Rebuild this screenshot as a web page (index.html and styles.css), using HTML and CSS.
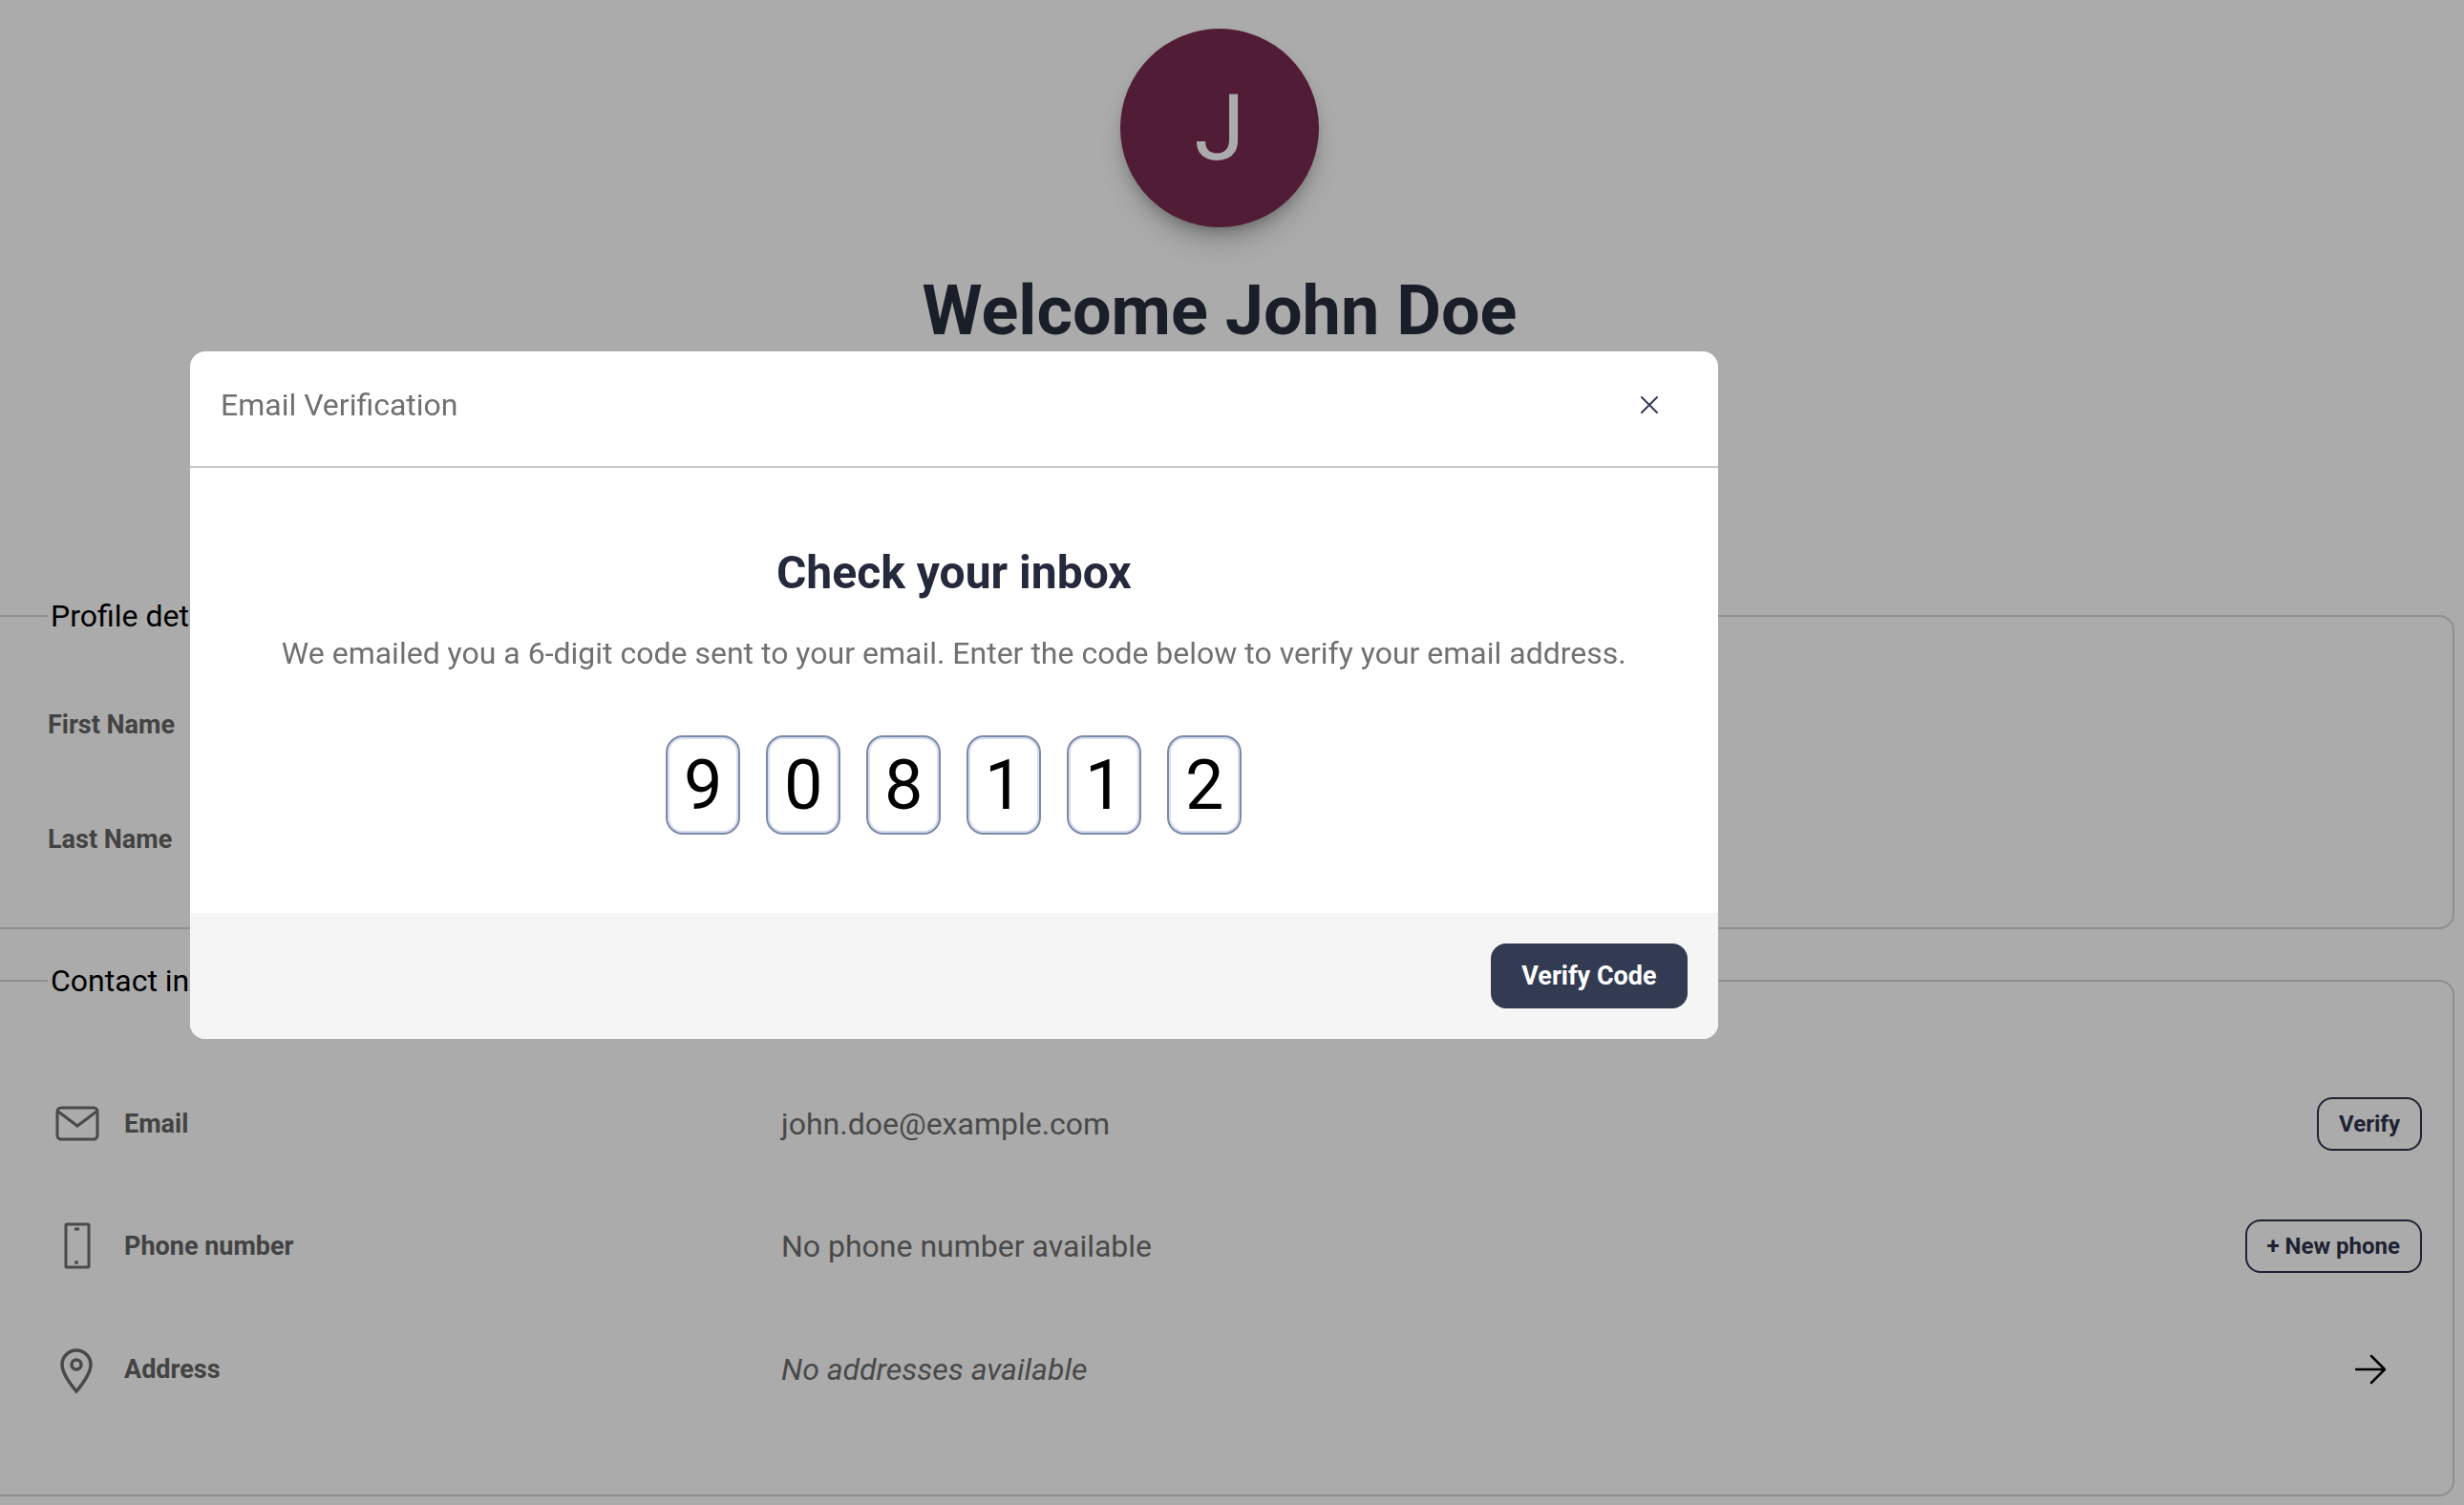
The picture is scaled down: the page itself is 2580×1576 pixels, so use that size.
FILE: index.html
```html
<!DOCTYPE html>
<html lang="en">
<head>
  <meta charset="UTF-8">
  <meta name="viewport" content="width=device-width, initial-scale=1.0">
  <title>Profile - Email Verification</title>
  <link rel="stylesheet" href="styles.css">
</head>
<body>
  <main class="profile">
    <header class="profile-header">
      <div class="avatar">J</div>
      <h1>Welcome John Doe</h1>
    </header>

    <fieldset class="details">
      <legend>Profile details</legend>
      <div class="row">
        <span class="label">First Name</span>
      </div>
      <div class="row">
        <span class="label">Last Name</span>
      </div>
    </fieldset>

    <fieldset class="contact">
      <legend>Contact information</legend>
      <div class="row">
        <span class="label">
          <svg class="icon" viewBox="2 2 60 60" aria-hidden="true">
            <rect x="12" y="15" width="42" height="33" rx="4"/>
            <path d="M13 19l20 15 20-15"/>
          </svg>
          Email
        </span>
        <span class="value">john.doe@example.com</span>
        <button type="button" class="btn-outline">Verify</button>
      </div>
      <div class="row">
        <span class="label">
          <svg class="icon" viewBox="2 2 60 60" aria-hidden="true">
            <rect x="21" y="9" width="24" height="45" rx="1"/>
            <path d="M30 14h5"/>
            <circle class="dot" cx="32" cy="49" r="2"/>
          </svg>
          Phone number
        </span>
        <span class="value">No phone number available</span>
        <button type="button" class="btn-outline">+ New phone</button>
      </div>
      <div class="row row-address">
        <span class="label">
          <svg class="icon" viewBox="2 2 60 60" aria-hidden="true">
            <path class="pin" d="M32 55C27 49 17 37 17 27a15 15 0 0 1 30 0C47 37 37 49 32 55z"/>
            <circle class="pin" cx="32" cy="27" r="5"/>
          </svg>
          Address
        </span>
        <em class="value">No addresses available</em>
        <a href="#addresses" class="arrow" aria-label="Addresses">
          <svg viewBox="0 0 32 32" aria-hidden="true">
            <path d="M1 16h30M17 2l14 14-14 14"/>
          </svg>
        </a>
      </div>
    </fieldset>
  </main>

  <div class="overlay">
    <form class="modal" role="dialog" aria-labelledby="modalTitle">
      <div class="modal-header">
        <span id="modalTitle">Email Verification</span>
        <button type="button" class="close" aria-label="Close">
          <svg viewBox="0 0 18 18" aria-hidden="true">
            <path d="M1 1l16 16M17 1L1 17"/>
          </svg>
        </button>
      </div>
      <div class="modal-body">
        <h2>Check your inbox</h2>
        <p>We emailed you a 6-digit code sent to your email. Enter the code below to verify your email address.</p>
        <div class="code">
          <input type="text" inputmode="numeric" maxlength="1" value="9" aria-label="Digit 1">
          <input type="text" inputmode="numeric" maxlength="1" value="0" aria-label="Digit 2">
          <input type="text" inputmode="numeric" maxlength="1" value="8" aria-label="Digit 3">
          <input type="text" inputmode="numeric" maxlength="1" value="1" aria-label="Digit 4">
          <input type="text" inputmode="numeric" maxlength="1" value="1" aria-label="Digit 5">
          <input type="text" inputmode="numeric" maxlength="1" value="2" aria-label="Digit 6">
        </div>
      </div>
      <div class="modal-footer">
        <button type="submit" class="btn">Verify Code</button>
      </div>
    </form>
  </div>
</body>
</html>
```

FILE: styles.css
```css
* {
  box-sizing: border-box;
}
body {
  margin: 0;
  background: #fff;
  color: #000;
  font-family: Roboto, Arial, sans-serif;
  font-size: 32px;
  overflow: hidden;
}
button, input {
  font-family: inherit;
}
.profile {
  margin: 0 10px 0 -16px;
}
.profile-header {
  display: flex;
  flex-direction: column;
  align-items: center;
  gap: 48px;
  padding-top: 30px;
  margin-bottom: 261px;
}
.avatar {
  display: flex;
  align-items: center;
  justify-content: center;
  width: 208px;
  height: 208px;
  border-radius: 50%;
  background: #7a2b4f;
  color: #fff;
  font-size: 96px;
  box-shadow: 0 20px 30px -6px rgba(0, 0, 0, 0.2), 0 8px 16px -6px rgba(0, 0, 0, 0.3);
}
h1 {
  margin: 0;
  color: #272d3d;
  font-size: 72px;
  line-height: 80px;
}
fieldset {
  margin: 0 0 36px;
  padding: 36px 32px 32px 64px;
  border: 2px solid #d4d4d4;
  border-radius: 16px;
}
.contact {
  padding-top: 68px;
  padding-bottom: 66px;
}
legend {
  padding: 0 3px;
  line-height: 36px;
}
.row {
  display: grid;
  grid-template-columns: 768px 1fr auto;
  align-items: center;
  height: 120px;
}
.contact .row {
  height: 128px;
}
.contact .row-address {
  height: 130px;
}
.label {
  display: flex;
  align-items: center;
  gap: 20px;
  color: #646464;
  font-size: 27px;
  font-weight: bold;
}
.value {
  color: #6e6e6e;
}
.icon {
  width: 60px;
  height: 60px;
  fill: none;
  stroke: #6e6e6e;
  stroke-width: 3;
}
.icon .pin {
  stroke-width: 3.5;
}
.icon .dot {
  fill: #6e6e6e;
  stroke: none;
}
.btn-outline {
  height: 56px;
  padding: 0 21px;
  border: 2px solid #2e344b;
  border-radius: 16px;
  background: none;
  color: #2e344b;
  font-size: 24px;
  font-weight: bold;
}
.arrow {
  display: flex;
  justify-content: center;
  width: 108px;
}
.arrow svg {
  width: 32px;
  height: 32px;
  fill: none;
  stroke: #000;
  stroke-width: 2.5;
  stroke-linecap: round;
  stroke-linejoin: round;
}

/* modal */
.overlay {
  position: fixed;
  inset: 0;
  padding: 368px 0 0 199px;
  background: rgba(0, 0, 0, 0.33);
}
.modal {
  width: 62vw;
  border-radius: 16px;
  background: #fff;
  overflow: hidden;
}
.modal-header {
  display: flex;
  align-items: center;
  justify-content: space-between;
  padding: 32px 32px 40px;
  border-bottom: 2px solid #c8c8c8;
  color: #707070;
  line-height: 48px;
}
.close {
  display: flex;
  align-items: center;
  justify-content: center;
  width: 80px;
  height: 48px;
  padding: 0;
  border: none;
  background: none;
}
.close svg {
  width: 18px;
  height: 18px;
  fill: none;
  stroke: #323b52;
  stroke-width: 2;
  stroke-linecap: round;
}
.modal-body {
  padding: 82px 32px;
  text-align: center;
}
h2 {
  margin: 0 0 32px;
  color: #25293c;
  font-size: 48px;
  line-height: 56px;
}
.modal-body p {
  margin: 0 0 62px;
  color: #707070;
  line-height: 48px;
}
.code {
  display: flex;
  justify-content: center;
  gap: 27px;
}
.code input {
  width: 78px;
  height: 104px;
  padding: 0;
  border: 2px solid #7c89a8;
  border-radius: 18px;
  box-shadow: inset 0 0 0 2px #d5ddee;
  background: #fff;
  color: #000;
  font-size: 72px;
  text-align: center;
  outline: none;
}
.modal-footer {
  display: flex;
  justify-content: flex-end;
  padding: 32px;
  background: #f5f5f5;
}
.btn {
  height: 68px;
  padding: 0 32px;
  border: none;
  border-radius: 16px;
  background: #323b52;
  color: #fff;
  font-size: 27px;
  font-weight: bold;
}
```
